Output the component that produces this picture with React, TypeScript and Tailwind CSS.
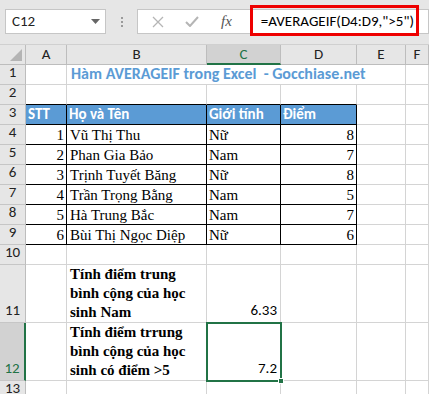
import React from 'react';

const cols = [
  { key: 'A', w: 'w-[41px]' },
  { key: 'B', w: 'w-[140px]' },
  { key: 'C', w: 'w-[74px]' },
  { key: 'D', w: 'w-[76px]' },
  { key: 'E', w: 'w-[49px]' },
  { key: 'F', w: 'flex-1' },
];

const people = [
  { stt: 1, name: 'Vũ Thị Thu', sex: 'Nữ', score: 8 },
  { stt: 2, name: 'Phan Gia Bảo', sex: 'Nam', score: 7 },
  { stt: 3, name: 'Trịnh Tuyết Băng', sex: 'Nữ', score: 8 },
  { stt: 4, name: 'Trần Trọng Bằng', sex: 'Nam', score: 5 },
  { stt: 5, name: 'Hà Trung Bắc', sex: 'Nam', score: 7 },
  { stt: 6, name: 'Bùi Thị Ngọc Diệp', sex: 'Nữ', score: 6 },
];

const calibri = "font-['Carlito','Liberation_Sans',Arial,sans-serif]";
const serif = "font-['Liberation_Serif','Times_New_Roman',serif]";

function RowHeader({ n, h, selected }: { n: number; h: string; selected?: boolean }) {
  return (
    <div
      className={`${h} w-[26px] shrink-0 flex items-end justify-center pb-[1px] text-[15px] ${calibri} border-b border-[#c6c6c6] ${
        selected
          ? 'bg-[#d2d2d2] text-[#217346] border-r-2 border-r-[#217346]'
          : 'bg-[#e6e6e6] text-[#222] border-r border-r-[#bdbdbd]'
      }`}
    >
      {n}
    </div>
  );
}

function Cell({
  w,
  h,
  className = '',
  children,
}: {
  w: string;
  h: string;
  className?: string;
  children?: React.ReactNode;
}) {
  return (
    <div className={`${w} ${h} shrink-0 border-r border-b border-[#d4d4d4] flex items-end overflow-visible whitespace-nowrap ${className}`}>
      {children}
    </div>
  );
}

export default function App() {
  return (
    <div className="relative w-[429px] h-[394px] overflow-hidden bg-white">
      {/* formula bar */}
      <div className="h-[45px] bg-[#e6e6e6] flex items-start pt-[9px] pl-[5px] border-b border-[#d0d0d0]">
        <div className="w-[101px] h-[25px] bg-white border border-[#c6c6c6] flex items-center justify-between pl-[6px] pr-[5px]">
          <span className={`text-[15px] text-[#222] ${calibri}`}>C12</span>
          <svg width="9" height="5" viewBox="0 0 9 5">
            <path d="M0 0 H9 L4.5 5 Z" fill="#666" />
          </svg>
        </div>
        <div className="w-[31px] h-[25px] flex flex-col items-center justify-center gap-[2px]">
          <span className="w-[2px] h-[2px] bg-[#9a9a9a]" />
          <span className="w-[2px] h-[2px] bg-[#9a9a9a]" />
          <span className="w-[2px] h-[2px] bg-[#9a9a9a]" />
        </div>
        <div className="flex-1 h-[25px] bg-white border border-[#c6c6c6] flex items-center">
          <svg width="12" height="12" viewBox="0 0 12 12" className="ml-[14px]">
            <path d="M1 1 L11 11 M11 1 L1 11" stroke="#b5b5b5" strokeWidth="1.3" />
          </svg>
          <svg width="14" height="11" viewBox="0 0 14 11" className="ml-[21px]">
            <path d="M1 6 L5 10 L13 1" stroke="#b5b5b5" strokeWidth="2" fill="none" />
          </svg>
          <span className={`ml-[22px] italic text-[15px] text-[#555] ${serif}`}>fx</span>
          <span className={`ml-[29px] text-[15px] text-black ${calibri}`}>=AVERAGEIF(D4:D9,"&gt;5")</span>
        </div>
      </div>

      {/* column headers */}
      <div className={`flex h-[20px] text-[15px] ${calibri}`}>
        <div className="w-[26px] h-[20px] shrink-0 bg-[#e6e6e6] border-r border-b border-[#bdbdbd] relative">
          <svg width="12" height="12" viewBox="0 0 12 12" className="absolute right-[3px] bottom-[3px]">
            <path d="M12 0 V12 H0 Z" fill="#b4b4b4" />
          </svg>
        </div>
        {cols.map((c) => (
          <div
            key={c.key}
            className={`${c.w} h-[20px] shrink-0 flex items-center justify-center border-r border-r-[#bdbdbd] ${
              c.key === 'C'
                ? 'bg-[#d2d2d2] text-[#217346] border-b-2 border-b-[#217346]'
                : 'bg-[#e6e6e6] text-[#222] border-b border-b-[#bdbdbd]'
            }`}
          >
            {c.key}
          </div>
        ))}
      </div>

      {/* row 1 */}
      <div className="flex">
        <RowHeader n={1} h="h-[20px]" />
        <Cell w="w-[41px]" h="h-[20px]" />
        <Cell w="w-[140px]" h="h-[20px]" className="border-r-0">
          <span className={`pl-[4px] pb-[1px] font-bold text-[16px] leading-[18px] text-[#5b9bd5] ${calibri}`}>
            Hàm AVERAGEIF trong Excel&nbsp; - Gocchiase.net
          </span>
        </Cell>
        <Cell w="w-[74px]" h="h-[20px]" className="border-r-0" />
        <Cell w="w-[76px]" h="h-[20px]" className="border-r-0" />
        <Cell w="w-[49px]" h="h-[20px]" />
        <Cell w="flex-1" h="h-[20px]" />
      </div>

      {/* row 2 */}
      <div className="flex">
        <RowHeader n={2} h="h-[20px]" />
        <Cell w="w-[41px]" h="h-[20px]" className="border-b-black" />
        <Cell w="w-[140px]" h="h-[20px]" className="border-b-black" />
        <Cell w="w-[74px]" h="h-[20px]" className="border-b-black" />
        <Cell w="w-[76px]" h="h-[20px]" className="border-b-black" />
        <Cell w="w-[49px]" h="h-[20px]" />
        <Cell w="flex-1" h="h-[20px]" />
      </div>

      {/* row 3 header */}
      <div className="flex">
        <RowHeader n={3} h="h-[20px]" />
        {['STT', 'Họ và Tên', 'Giới tính', 'Điểm'].map((t, i) => (
          <Cell
            key={t}
            w={['w-[41px]', 'w-[140px]', 'w-[74px]', 'w-[76px]'][i]}
            h="h-[20px]"
            className="bg-[#5b9bd5] border-black"
          >
            <span className={`pl-[2px] pb-[1px] font-bold text-[15px] leading-[18px] text-white ${calibri}`}>{t}</span>
          </Cell>
        ))}
        <Cell w="w-[49px]" h="h-[20px]" />
        <Cell w="flex-1" h="h-[20px]" />
      </div>

      {/* data rows */}
      {people.map((p, i) => (
        <div key={p.stt} className={`flex text-[15px] text-black ${serif}`}>
          <RowHeader n={4 + i} h="h-[20px]" />
          <Cell w="w-[41px]" h="h-[20px]" className="border-black justify-end">
            <span className="pr-[2px] leading-[18px]">{p.stt}</span>
          </Cell>
          <Cell w="w-[140px]" h="h-[20px]" className="border-black">
            <span className="pl-[3px] leading-[18px]">{p.name}</span>
          </Cell>
          <Cell w="w-[74px]" h="h-[20px]" className="border-black">
            <span className="pl-[2px] leading-[18px]">{p.sex}</span>
          </Cell>
          <Cell w="w-[76px]" h="h-[20px]" className="border-black justify-end">
            <span className="pr-[2px] leading-[18px]">{p.score}</span>
          </Cell>
          <Cell w="w-[49px]" h="h-[20px]" />
          <Cell w="flex-1" h="h-[20px]" />
        </div>
      ))}

      {/* row 10 */}
      <div className="flex">
        <RowHeader n={10} h="h-[20px]" />
        <Cell w="w-[41px]" h="h-[20px]" />
        <Cell w="w-[140px]" h="h-[20px]" />
        <Cell w="w-[74px]" h="h-[20px]" />
        <Cell w="w-[76px]" h="h-[20px]" />
        <Cell w="w-[49px]" h="h-[20px]" />
        <Cell w="flex-1" h="h-[20px]" />
      </div>

      {/* row 11 */}
      <div className="flex">
        <RowHeader n={11} h="h-[58px]" />
        <Cell w="w-[41px]" h="h-[58px]" />
        <Cell w="w-[140px]" h="h-[58px]">
          <span className={`pl-[3px] whitespace-normal font-bold text-[15px] leading-[19px] ${serif}`}>
            Tính điểm trung
            <br />
            bình cộng của học
            <br />
            sinh Nam
          </span>
        </Cell>
        <Cell w="w-[74px]" h="h-[58px]" className="justify-end">
          <span className={`pr-[3px] pb-[1px] text-[15px] text-black ${calibri}`}>6.33</span>
        </Cell>
        <Cell w="w-[76px]" h="h-[58px]" />
        <Cell w="w-[49px]" h="h-[58px]" />
        <Cell w="flex-1" h="h-[58px]" />
      </div>

      {/* row 12 */}
      <div className="flex">
        <RowHeader n={12} h="h-[58px]" selected />
        <Cell w="w-[41px]" h="h-[58px]" />
        <Cell w="w-[140px]" h="h-[58px]">
          <span className={`pl-[3px] whitespace-normal font-bold text-[15px] leading-[19px] ${serif}`}>
            Tính điểm trrung
            <br />
            bình cộng của học
            <br />
            sinh có điểm &gt;5
          </span>
        </Cell>
        <Cell w="w-[74px]" h="h-[58px]" className="justify-end relative">
          <span className={`pr-[3px] pb-[1px] text-[15px] text-black ${calibri}`}>7.2</span>
        </Cell>
        <Cell w="w-[76px]" h="h-[58px]" />
        <Cell w="w-[49px]" h="h-[58px]" />
        <Cell w="flex-1" h="h-[58px]" />
      </div>

      {/* row 13 */}
      <div className="flex">
        <RowHeader n={13} h="h-[20px]" />
        <Cell w="w-[41px]" h="h-[20px]" />
        <Cell w="w-[140px]" h="h-[20px]" />
        <Cell w="w-[74px]" h="h-[20px]" />
        <Cell w="w-[76px]" h="h-[20px]" />
        <Cell w="w-[49px]" h="h-[20px]" />
        <Cell w="flex-1" h="h-[20px]" />
      </div>

      {/* selection C12 */}
      <div className="absolute left-[206px] top-[322px] w-[76px] h-[60px] border-2 border-[#217346] pointer-events-none" />
      <div className="absolute left-[278px] top-[378px] w-[6px] h-[6px] bg-[#217346] border border-white" />

      {/* red annotation box */}
      <div className="absolute left-[250px] top-[5px] w-[169px] h-[31px] border-[3px] border-[#ee0000] pointer-events-none" />
    </div>
  );
}
